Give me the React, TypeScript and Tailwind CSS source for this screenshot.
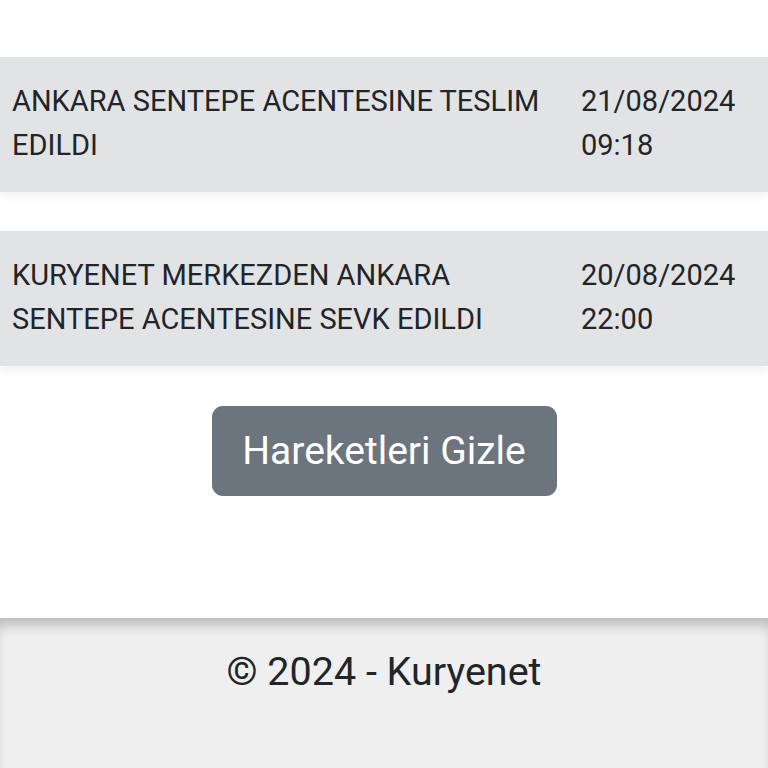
import React from 'react';

interface MovementRowProps {
    text: string;
    date: string;
    time: string;
}

const movements: MovementRowProps[] = [
    { text: 'ANKARA SENTEPE ACENTESINE TESLIM EDILDI', date: '21/08/2024', time: '09:18' },
    { text: 'KURYENET MERKEZDEN ANKARA SENTEPE ACENTESINE SEVK EDILDI', date: '20/08/2024', time: '22:00' },
];

const MovementRow = ({ text, date, time }: MovementRowProps) => (
    <div className="grid grid-cols-[568px_1fr] bg-[#e2e3e5] text-[#212529] text-[29px] leading-[44px] shadow-[0_5px_8px_rgba(0,0,0,0.05)]">
        <div className="pl-[12px] pr-[12px] pt-[22px] pb-[25px]">{text}</div>
        <div className="pl-[13px] pt-[22px] pb-[25px]">
            <div>{date}</div>
            <div>{time}</div>
        </div>
    </div>
);

const App = () => {
    return (
        <div className="min-h-screen flex flex-col bg-white font-['Roboto',sans-serif]">
            <main className="pt-[57px] pb-[122px] bg-white">
                <div className="flex flex-col gap-[39px]">
                    {movements.map((m, i) => (
                        <MovementRow key={i} {...m} />
                    ))}
                </div>
                <div className="flex justify-center mt-[40px]">
                    <button className="w-[345px] h-[90px] rounded-[11px] bg-[#6c757d] text-white text-[39px] leading-none">
                        Hareketleri Gizle
                    </button>
                </div>
            </main>

            <footer className="flex-1 bg-[#efefef] shadow-[inset_0_12px_14px_-6px_rgba(0,0,0,0.25)] pt-[30px] pb-[60px] text-center text-[39.5px] leading-[48px] text-[#212529]">
                © 2024 - Kuryenet
            </footer>
        </div>
    );
};

export default App;
